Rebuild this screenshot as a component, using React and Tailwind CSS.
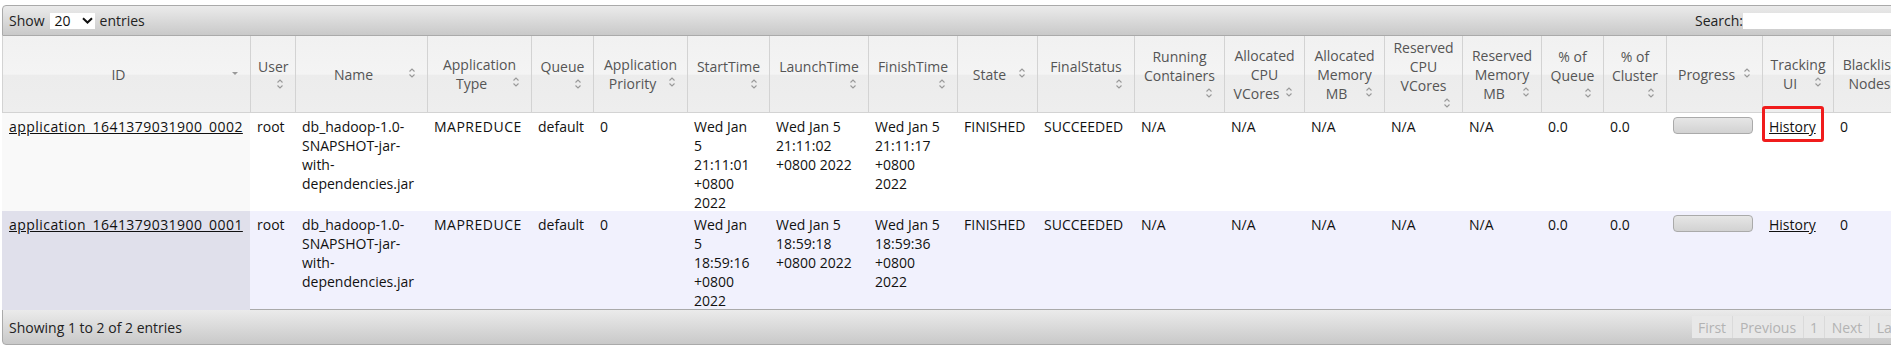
import React from "react";

const GRID =
  "grid grid-cols-[248px_45px_132px_104px_62px_94px_82px_99px_89px_80px_97px_90px_80px_80px_78px_79px_62px_63px_96px_71px_88px]";

const cols = [
  { label: ["ID"], icon: "tri" },
  { label: ["User"], icon: "below" },
  { label: ["Name"], icon: "inline" },
  { label: ["Application", "Type"], icon: "inline" },
  { label: ["Queue"], icon: "below" },
  { label: ["Application", "Priority"], icon: "inline" },
  { label: ["StartTime"], icon: "below" },
  { label: ["LaunchTime"], icon: "below" },
  { label: ["FinishTime"], icon: "below" },
  { label: ["State"], icon: "inline" },
  { label: ["FinalStatus"], icon: "below" },
  { label: ["Running", "Containers"], icon: "below" },
  { label: ["Allocated", "CPU", "VCores"], icon: "inline" },
  { label: ["Allocated", "Memory", "MB"], icon: "inline" },
  { label: ["Reserved", "CPU", "VCores"], icon: "below" },
  { label: ["Reserved", "Memory", "MB"], icon: "inline" },
  { label: ["% of", "Queue"], icon: "below" },
  { label: ["% of", "Cluster"], icon: "below" },
  { label: ["Progress"], icon: "inline" },
  { label: ["Tracking", "UI"], icon: "inline" },
  { label: ["Blacklisted", "Nodes"], icon: "inline" },
];

function SortIcon() {
  return (
    <svg width="16" height="16" viewBox="0 0 16 16" className="block">
      <path d="M5.5 6.5 L8 4 L10.5 6.5" fill="none" stroke="#999" strokeWidth="1.1" />
      <path d="M5.5 9.5 L8 12 L10.5 9.5" fill="none" stroke="#999" strokeWidth="1.1" />
    </svg>
  );
}

function TriIcon() {
  return (
    <svg width="16" height="16" viewBox="0 0 16 16" className="block">
      <path d="M5 7 L11 7 L8 10 Z" fill="#999" />
    </svg>
  );
}

function HeaderCell({ col }) {
  const lines = col.label;
  const last = lines.length - 1;
  const icon = col.icon === "tri" ? <TriIcon /> : <SortIcon />;
  return (
    <div className="flex items-center border-r border-[#d3d3d3] px-[7px] text-[#555]">
      <div className="flow-root w-full text-center leading-[19px]">
        {lines.slice(0, last).map((l) => (
          <div key={l} className="whitespace-nowrap">
            {l}
          </div>
        ))}
        {col.icon === "below" ? (
          <>
            <div className="whitespace-nowrap">{lines[last]}</div>
            <span className="float-right block h-4 w-4">{icon}</span>
          </>
        ) : (
          <div className="whitespace-nowrap">
            <span className="float-right block h-4 w-4">{icon}</span>
            {lines[last]}
          </div>
        )}
      </div>
    </div>
  );
}

function Lines({ items }) {
  return (
    <>
      {items.map((t, i) => (
        <div key={i} className="whitespace-nowrap">
          {t}
        </div>
      ))}
    </>
  );
}

const rows = [
  {
    id: "application_1641379031900_0002",
    start: ["Wed Jan", "5", "21:11:01", "+0800", "2022"],
    launch: ["Wed Jan 5", "21:11:02", "+0800 2022"],
    finish: ["Wed Jan 5", "21:11:17", "+0800", "2022"],
    bg: "bg-white",
    idBg: "bg-[#f9f9f9]",
  },
  {
    id: "application_1641379031900_0001",
    start: ["Wed Jan", "5", "18:59:16", "+0800", "2022"],
    launch: ["Wed Jan 5", "18:59:18", "+0800 2022"],
    finish: ["Wed Jan 5", "18:59:36", "+0800", "2022"],
    bg: "bg-[#f1f1fd]",
    idBg: "bg-[#e0e0eb]",
  },
];

function Cell({ children, className = "" }) {
  return <div className={"px-[7px] pt-[4px] leading-[19px] " + className}>{children}</div>;
}

function Row({ r }) {
  return (
    <div className={GRID + " h-[98px] text-[#111] " + r.bg}>
      <Cell className={r.idBg}>
        <a className="whitespace-nowrap tracking-[0.45px] text-[#111] underline">{r.id}</a>
      </Cell>
      <Cell>root</Cell>
      <Cell>
        <Lines items={["db_hadoop-1.0-", "SNAPSHOT-jar-", "with-", "dependencies.jar"]} />
      </Cell>
      <Cell className="tracking-[0.5px]">MAPREDUCE</Cell>
      <Cell>default</Cell>
      <Cell>0</Cell>
      <Cell>
        <Lines items={r.start} />
      </Cell>
      <Cell>
        <Lines items={r.launch} />
      </Cell>
      <Cell>
        <Lines items={r.finish} />
      </Cell>
      <Cell>FINISHED</Cell>
      <Cell>SUCCEEDED</Cell>
      <Cell>N/A</Cell>
      <Cell>N/A</Cell>
      <Cell>N/A</Cell>
      <Cell>N/A</Cell>
      <Cell>N/A</Cell>
      <Cell>0.0</Cell>
      <Cell>0.0</Cell>
      <Cell>
        <div className="h-[17px] w-[80px] rounded-[4px] border border-[#aaa] bg-linear-to-b from-[#e6e6e6] to-[#d2d2d2]" />
      </Cell>
      <Cell>
        <a className="text-[#111] underline">History</a>
      </Cell>
      <Cell>0</Cell>
    </div>
  );
}

export default function App() {
  return (
    <div className="relative h-[350px] w-[1891px] overflow-hidden bg-white pl-[2px] pt-[5px] font-['Open_Sans',sans-serif] text-[14px] text-[#222]">
      <div className="w-[1919px]">
        {/* top toolbar */}
        <div className="flex h-[31px] items-center justify-between rounded-tl-[4px] border border-[#aaa] bg-linear-to-b from-[#ebebeb] to-[#c9c9c9] pl-[6px] pr-[7px]">
          <div className="flex items-center leading-[19px]">
            <span>Show</span>
            <div className="ml-[5px] flex h-4 w-[45px] items-center bg-white pl-[5px]">
              <span className="text-[#111]">20</span>
              <svg width="11" height="7" viewBox="0 0 11 7" className="ml-[11px]">
                <path d="M1 1.2 L5.5 5.5 L10 1.2" fill="none" stroke="#111" strokeWidth="2" />
              </svg>
            </div>
            <span className="ml-[5px]">entries</span>
          </div>
          <div className="flex items-center leading-[19px]">
            <span>Search:</span>
            <div className="h-4 w-[170px] bg-white" />
          </div>
        </div>

        {/* header */}
        <div
          className={
            GRID +
            " h-[77px] border-b border-l border-[#d3d3d3] bg-[linear-gradient(to_bottom,#f1f1f1_0%,#f4f4f4_50%,#ececec_52%,#eeeeee_100%)]"
          }
        >
          {cols.map((c) => (
            <HeaderCell key={c.label.join(" ")} col={c} />
          ))}
        </div>

        {rows.map((r) => (
          <Row key={r.id} r={r} />
        ))}

        {/* footer */}
        <div className="flex h-[36px] items-center justify-between rounded-bl-[4px] border border-[#aaa] bg-linear-to-b from-[#ebebeb] to-[#c9c9c9] pl-[6px] pr-[10px]">
          <span>Showing 1 to 2 of 2 entries</span>
          <div className="flex h-[22px] text-[#b3b3b3]">
            <span className="flex w-[41px] items-center justify-center border-r border-[#dadada] bg-[#e8e8e8]">First</span>
            <span className="flex w-[71px] items-center justify-center border-r border-[#dadada] bg-[#e8e8e8]">Previous</span>
            <span className="flex w-[21px] items-center justify-center border-r border-[#dadada] bg-[#e8e8e8]">1</span>
            <span className="flex w-[45px] items-center justify-center border-r border-[#dadada] bg-[#e8e8e8]">Next</span>
            <span className="flex w-[40px] items-center justify-center bg-[#e8e8e8]">Last</span>
          </div>
        </div>
      </div>

      {/* red annotation */}
      <div className="pointer-events-none absolute left-[1762px] top-[106px] h-[36px] w-[62px] rounded-[3px] border-[3px] border-[#f01c1c]" />
    </div>
  );
}
